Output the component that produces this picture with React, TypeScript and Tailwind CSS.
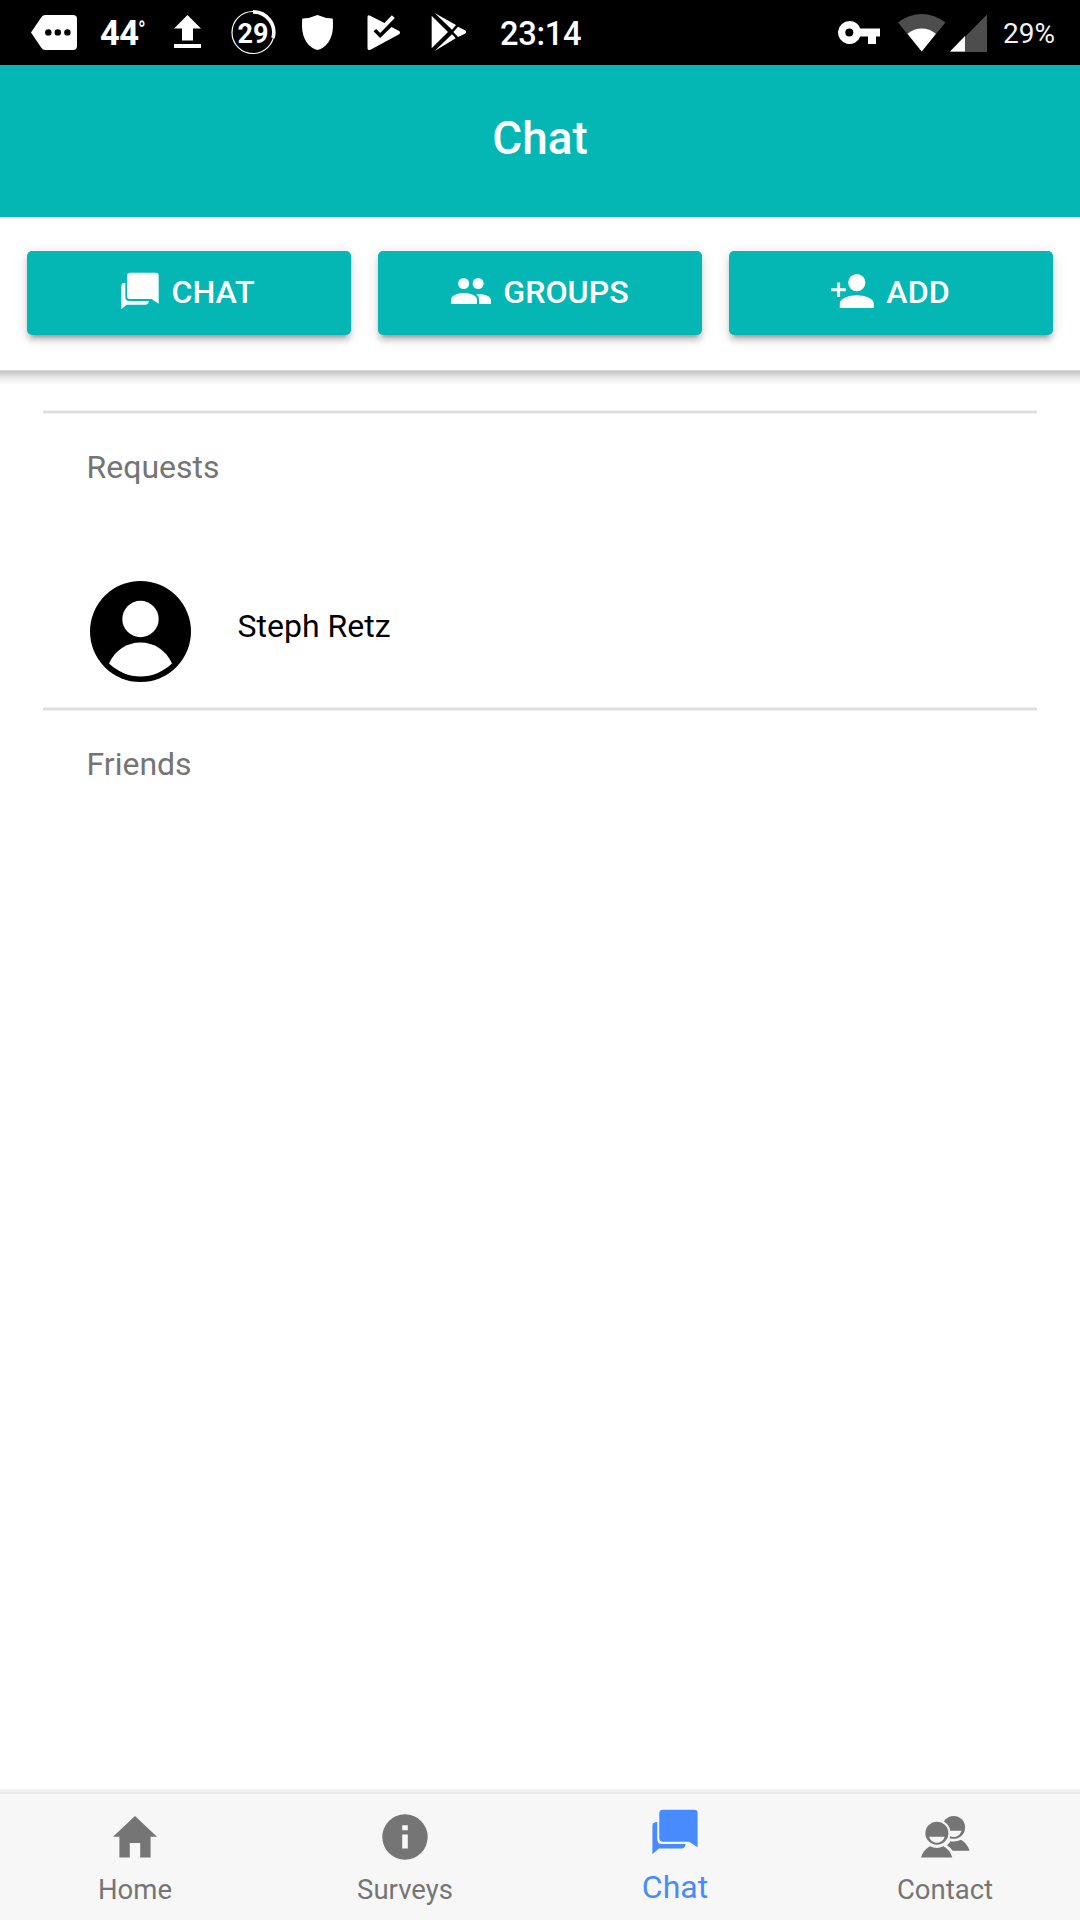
import type { ReactNode } from "react";

function ChatIcon({ className }: { className: string }) {
  return (
    <svg viewBox="364 217 114 112" className={className} fill="currentColor">
      <path d="M391 218H469Q477 218 477 226V311L456 297H391Q382 297 382 288V227Q382 218 391 218Z" />
      <path d="M377 248V291Q377 303 389 303H447Q447 314 437 314H381L365 328V258Q365 248 377 248Z" />
    </svg>
  );
}

function GroupIcon() {
  return (
    <svg viewBox="273 234 120 78" className="h-[26px] w-10" fill="currentColor">
      <circle cx="311" cy="250.500" r="16.500" />
      <circle cx="354.500" cy="250.500" r="16.500" />
      <path d="M273 312V299C273 286 294 279 312 279S351 286 351 299V312Z" />
      <path d="M357 312V299Q357 289 349 283C369 281 393 287 393 300V312Z" />
    </svg>
  );
}

function AddIcon() {
  return (
    <svg viewBox="363 221 129 103" className="-ml-px h-[34px] w-[43px]" fill="currentColor">
      <circle cx="440.500" cy="247" r="26" />
      <path d="M389 324V311C389 294 417 285 440.500 285S492 294 492 311V324Z" />
      <path d="M381 247H390V264H407V273H390V291H381V273H363V264H381Z" />
    </svg>
  );
}

function Avatar() {
  return (
    <svg viewBox="0 0 101 101" className="size-[101px]">
      <circle cx="50.500" cy="50.500" r="50.500" fill="#000" />
      <circle cx="50.500" cy="38" r="18.200" fill="#fff" />
      <path d="M19 82.500C25 69 37 61.500 50.500 61.500S76 69 82 82.500C73 91 62 95.500 50.500 95.500S28 91 19 82.500Z" fill="#fff" />
    </svg>
  );
}

function HomeIcon() {
  return (
    <svg viewBox="0 0 44 42" className="h-[42px] w-11" fill="currentColor">
      <path d="M22 0L44 20.700H37.600V41.500H27.200V27H16.800V41.500H6.400V20.700H0Z" />
    </svg>
  );
}

function InfoIcon() {
  return (
    <svg viewBox="0 0 46 46" className="size-[46px]">
      <circle cx="23" cy="23" r="22.700" fill="currentColor" />
      <path d="M20.200 11.300H25.800V16.200H20.200ZM20.200 20.500H25.800V34.600H20.200Z" fill="#f7f7f7" />
    </svg>
  );
}

function ContactIcon() {
  return (
    <svg viewBox="0 0 49 42" className="h-[42px] w-[49px]" fill="currentColor">
      <circle cx="32.700" cy="11.400" r="11.400" />
      <path d="M25 14.700H40.500C39.500 18.500 36.500 21 32.700 21S26 18.500 25 14.700Z" fill="#f7f7f7" />
      <path d="M31.500 34.800Q29.500 31.500 26 29.300Q28.600 27.500 29.300 25.200Q35 26.300 40 23.800Q46 27 48.600 34.800Z" />
      <circle cx="15.900" cy="17.200" r="13.600" fill="#f7f7f7" />
      <circle cx="15.900" cy="17.200" r="11.500" />
      <path d="M8.100 20.800H23.700C22.500 24.500 19.500 26.800 15.900 26.800S9.300 24.500 8.100 20.800Z" fill="#f7f7f7" />
      <path d="M0 41.600Q2.600 33.500 9 30.300Q15.700 33.500 22.400 30.300Q28.800 33.500 31.300 41.600Z" />
    </svg>
  );
}

function StatusBar() {
  return (
    <div className="flex h-[65px] items-start bg-black text-white">
      <svg viewBox="0 0 46 35" className="mt-[15px] ml-[31px] h-[35px] w-[46px]">
        <path d="M0 17.500L10.500 2Q12 0 14 0H42Q46 0 46 4V31Q46 35 42 35H14Q12 35 10.500 33Z" fill="#fff" />
        <circle cx="17.300" cy="17.400" r="3.200" />
        <circle cx="26.800" cy="17.400" r="3.200" />
        <circle cx="36.400" cy="17.400" r="3.200" />
      </svg>
      <div className="mt-[13px] ml-[23px] flex w-[74px] text-[34.5px] leading-[41px] font-bold">
        <span className="w-[38px] tracking-[-0.5px]">44</span>
        <span className="mt-[4px] origin-top scale-y-130 text-[20px] leading-[20px] font-medium">°</span>
      </div>
      <svg viewBox="0 0 27 33" className="mt-[15px] h-[33px] w-[27px]" fill="#fff">
        <path d="M13.500 0L27 13.500H19V25.500H8V13.500H0ZM0 29H27V33H0Z" />
      </svg>
      <div className="relative mt-[10px] ml-[30px] flex size-[45px] items-center justify-center">
        <svg viewBox="0 0 45 45" className="absolute inset-0" fill="none" stroke="#fff">
          <circle cx="22" cy="22.500" r="21" strokeWidth="1.200" />
          <path d="M22 1.900A20.600 20.600 0 0 1 42 28" strokeWidth="3.600" />
        </svg>
        <span className="mt-[2px] mr-px text-[27px] leading-[32px] font-bold">29</span>
      </div>
      <svg viewBox="0 0 31 35" className="mt-[15px] ml-[26px] h-[35px] w-[31px]" fill="#fff">
        <path d="M15.500 0Q23 3.300 30.500 3.600Q31 4 31 11C31 24 24 33 15.500 35C7 33 0 24 0 11Q0 4 .5 3.600Q8 3.300 15.500 0Z" />
      </svg>
      <svg viewBox="230 44 101 108" className="mt-[15px] ml-[34px] h-[36px] w-[34px]" fill="#fff">
        <path d="M231 50Q231 43 239 46L282 68L304 45L313 53L269 98L257 86L249 93L269 113L303 80L326 92Q331 97 326 102L240 148Q231 152 231 144Z" />
      </svg>
      <svg viewBox="422 40 106 114" className="mt-[13px] ml-[30px] h-[38px] w-[36px]" fill="#fff">
        <path d="M423 48L472 97L423 146ZM432 40L496 76L484 90ZM432 154L484 104L495 116ZM502 81L523 92Q530 97 523 102L502 112L488 97Z" />
      </svg>
      <div className="mt-[15px] ml-[33px] text-[32.6px] leading-[38px] font-medium tracking-[-0.3px]">23:14</div>
      <div className="ml-auto flex items-start">
        <svg viewBox="0 0 42 24" className="mt-[21px] h-[24px] w-[42px]">
          <path d="M11.500 0A11.500 11.500 0 0 1 22.300 7.500H42V15.500H38V23H30V15.500H22.300A11.500 11.500 0 1 1 11.500 0Z" fill="#fff" />
          <circle cx="11.300" cy="11.500" r="4" />
        </svg>
        <svg viewBox="0 0 48 38" className="mt-[14px] ml-[18px] h-[38px] w-[48px]">
          <path d="M0 8.500Q11 0 23.700 0T47.400 8.500L23.700 37.500Z" fill="#4d4d4d" />
          <path d="M9.500 19.700Q16 14.500 23.700 14.500T37.900 19.700L23.700 37.500Z" fill="#fff" />
        </svg>
        <svg viewBox="0 0 38 38" className="mt-[14px] ml-[4px] size-[38px]">
          <path d="M0 38L37 .5V38Z" fill="#4d4d4d" />
          <path d="M0 37.500L15 22V37.500Z" fill="#fff" />
        </svg>
        <div className="mt-[18px] mr-[25px] ml-[15px] text-[28px] leading-[32px] text-[#f2f2f2]">29%</div>
      </div>
    </div>
  );
}

function ActionButton({ icon, label }: { icon: ReactNode; label: string }) {
  return (
    <button className="flex h-[84px] flex-1 items-center justify-center gap-[12px] rounded-[5px] bg-[#04b6b4] pb-[5px] text-[32.2px] font-medium text-white shadow-[0_5.4px_5.4px_rgba(0,0,0,0.14),0_8.1px_2.7px_-5.4px_rgba(0,0,0,0.2),0_2.7px_13.5px_rgba(0,0,0,0.12)]">
      {icon}
      <span className="mt-[3px] leading-[38px]">{label}</span>
    </button>
  );
}

function Divider() {
  return <div className="h-1 border-y border-[#f0f0f0] bg-[#dedede]" />;
}

function Tab({ icon, label }: { icon: ReactNode; label: string }) {
  return (
    <div className="flex flex-1 flex-col items-center text-[#757575]">
      <div className="flex h-[90px] items-center">{icon}</div>
      <div className="-mt-[8px] text-[27.5px] leading-[32px]">{label}</div>
    </div>
  );
}

export default function App() {
  return (
    <div className="flex h-[1920px] w-[1080px] flex-col overflow-hidden bg-white font-[Roboto,sans-serif]">
      <StatusBar />
      <header className="flex h-[152px] items-center justify-center bg-[#04b6b4] pb-[5px] text-[45.9px] font-medium text-white">
        Chat
      </header>
      <div className="flex h-[153px] gap-[27px] px-[27px] pt-[34px]">
        <ActionButton icon={<ChatIcon className="-ml-0.5 size-[38px]" />} label="CHAT" />
        <ActionButton icon={<GroupIcon />} label="GROUPS" />
        <ActionButton icon={<AddIcon />} label="ADD" />
      </div>
      <div className="h-[15px] border-t border-[#dcdcdc] bg-linear-to-b from-black/23 via-black/8 to-transparent" />
      <main className="flex flex-1 flex-col px-[43px] pt-[25px] text-[32px] leading-[38px]">
        <Divider />
        <section className="h-[293px] pt-[34px] pl-[43.500px]">
          <h2 className="text-[#757575]">Requests</h2>
          <div className="mt-[95px] ml-[3.500px] flex">
            <Avatar />
            <span className="mt-[26px] ml-[46.500px] text-black">Steph Retz</span>
          </div>
        </section>
        <Divider />
        <section className="pt-[34px] pl-[43.500px]">
          <h2 className="text-[#757575]">Friends</h2>
        </section>
      </main>
      <nav className="flex h-[131px] border-t-[3px] border-[#f1f1f1] bg-[#f7f7f7] shadow-[inset_0_2px_0_#e9e9e9]">
        <Tab icon={<HomeIcon />} label="Home" />
        <Tab icon={<InfoIcon />} label="Surveys" />
        <div className="flex flex-1 flex-col items-center text-[#488aff]">
          <ChatIcon className="mt-[17px] mr-px size-[46px]" />
          <div className="mt-[14px] text-[32px] leading-[36px]">Chat</div>
        </div>
        <Tab icon={<ContactIcon />} label="Contact" />
      </nav>
    </div>
  );
}
